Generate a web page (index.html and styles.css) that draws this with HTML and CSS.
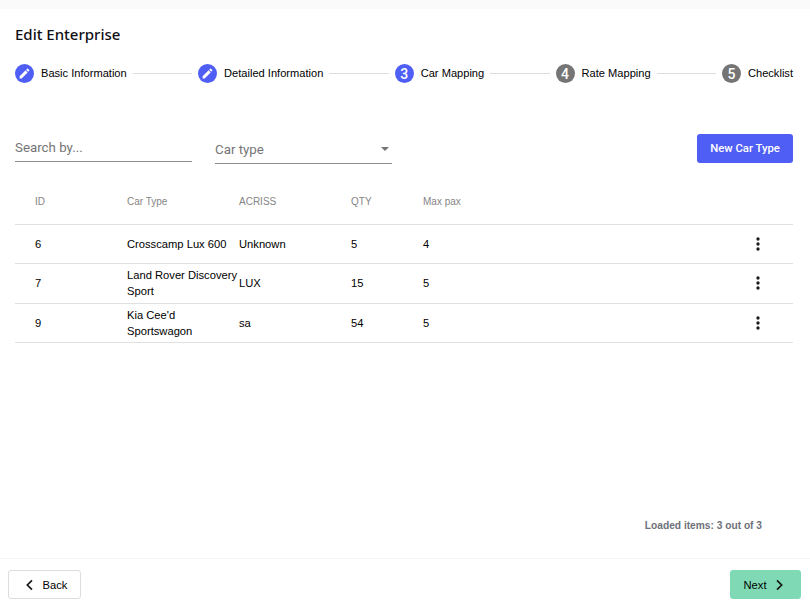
FILE: index.html
```html
<!DOCTYPE html>
<html lang="en">
<head>
<meta charset="utf-8">
<title>Edit Enterprise</title>
<link rel="stylesheet" href="styles.css">
</head>
<body>
<div class="page">
  <div class="topband"></div>
  <main class="main">
    <h1 class="title">Edit Enterprise</h1>
    <div class="stepper">
      <div class="step"><span class="circle active"><svg width="13" height="13" viewBox="0 0 24 24"><path fill="#fff" d="M3 17.25V21h3.75L17.81 9.94l-3.75-3.75L3 17.25zM20.71 7.04a1 1 0 0 0 0-1.41l-2.34-2.34a1 1 0 0 0-1.41 0l-1.83 1.83 3.75 3.75 1.83-1.83z"/></svg></span><span class="label">Basic Information</span></div>
      <div class="line"></div>
      <div class="step"><span class="circle active"><svg width="13" height="13" viewBox="0 0 24 24"><path fill="#fff" d="M3 17.25V21h3.75L17.81 9.94l-3.75-3.75L3 17.25zM20.71 7.04a1 1 0 0 0 0-1.41l-2.34-2.34a1 1 0 0 0-1.41 0l-1.83 1.83 3.75 3.75 1.83-1.83z"/></svg></span><span class="label">Detailed Information</span></div>
      <div class="line"></div>
      <div class="step"><span class="circle active">3</span><span class="label">Car Mapping</span></div>
      <div class="line"></div>
      <div class="step"><span class="circle">4</span><span class="label">Rate Mapping</span></div>
      <div class="line"></div>
      <div class="step"><span class="circle">5</span><span class="label">Checklist</span></div>
    </div>
    <div class="filters">
      <div class="field search"><span class="placeholder">Search by...</span></div>
      <div class="field select"><span class="placeholder">Car type</span><span class="caret"></span></div>
      <button class="primary" type="button">New Car Type</button>
    </div>
    <div class="table">
      <div class="row head"><span>ID</span><span>Car Type</span><span>ACRISS</span><span>QTY</span><span>Max pax</span><span></span></div>
      <div class="row"><span>6</span><span>Crosscamp Lux 600</span><span>Unknown</span><span>5</span><span>4</span><span class="menu"><svg width="20" height="20" viewBox="0 0 24 24"><path fill="#1a1a1a" d="M12 8a2 2 0 1 0 0-4 2 2 0 0 0 0 4zm0 2a2 2 0 1 0 0 4 2 2 0 0 0 0-4zm0 6a2 2 0 1 0 0 4 2 2 0 0 0 0-4z"/></svg></span></div>
      <div class="row"><span>7</span><span>Land Rover Discovery Sport</span><span>LUX</span><span>15</span><span>5</span><span class="menu"><svg width="20" height="20" viewBox="0 0 24 24"><path fill="#1a1a1a" d="M12 8a2 2 0 1 0 0-4 2 2 0 0 0 0 4zm0 2a2 2 0 1 0 0 4 2 2 0 0 0 0-4zm0 6a2 2 0 1 0 0 4 2 2 0 0 0 0-4z"/></svg></span></div>
      <div class="row"><span>9</span><span>Kia Cee'd Sportswagon</span><span>sa</span><span>54</span><span>5</span><span class="menu"><svg width="20" height="20" viewBox="0 0 24 24"><path fill="#1a1a1a" d="M12 8a2 2 0 1 0 0-4 2 2 0 0 0 0 4zm0 2a2 2 0 1 0 0 4 2 2 0 0 0 0-4zm0 6a2 2 0 1 0 0 4 2 2 0 0 0 0-4z"/></svg></span></div>
    </div>
    <div class="loaded">Loaded items: 3 out of 3</div>
  </main>
  <footer class="footer">
    <button class="nav back" type="button"><svg width="16" height="16" viewBox="0 0 24 24"><path fill="none" stroke="#1a1a1a" stroke-width="2.6" d="M15 5l-7 7 7 7"/></svg>Back</button>
    <button class="nav next" type="button">Next<svg width="16" height="16" viewBox="0 0 24 24"><path fill="none" stroke="#1a1a1a" stroke-width="2.6" d="M9 5l7 7-7 7"/></svg></button>
  </footer>
</div>
</body>
</html>
```
FILE: styles.css
```css
* { box-sizing: border-box; }
html, body { margin: 0; padding: 0; background: #fff; }
body { font-family: "Liberation Sans", Arial, sans-serif; color: #111; }
.page { width: 810px; height: 609px; display: flex; flex-direction: column; overflow: hidden; }
.topband { height: 9px; background: #fafafa; flex: none; }
.main { flex: 1; display: flex; flex-direction: column; padding: 0 17px 0 15px; min-height: 0; }
.title { margin: 15px 0 0; font: 500 15px/20px "Noto Sans", sans-serif; color: #111115; }
.stepper { display: flex; align-items: center; margin-top: 20px; height: 19px; }
.step { display: flex; align-items: center; gap: 7px; flex: none; }
.circle { width: 19px; height: 19px; border-radius: 50%; background: #757575; color: #fff; font: 500 14px Roboto, sans-serif; display: flex; align-items: center; justify-content: center; }
.circle.active { background: #4f5ef5; }
.label { font-size: 11.1px; line-height: 16px; padding-bottom: 1px; font-weight: 400; color: #000; }
.line { flex: 1; height: 1px; background: #ddd; margin: 0 6px; }
.filters { display: flex; align-items: flex-start; margin-top: 51px; height: 42px; }
.field { width: 177px; display: flex; align-items: center; border-bottom: 1px solid #8c8c8c; color: #757575; font: 400 13.3px Roboto, sans-serif; }
.search { height: 28px; padding-bottom: 1px; }
.select { height: 30px; margin-left: 23px; padding-top: 1px; justify-content: space-between; padding-right: 3px; }
.caret { width: 0; height: 0; border-left: 4px solid transparent; border-right: 4px solid transparent; border-top: 4px solid #757575; }
.primary { margin-left: auto; width: 96px; height: 29px; border: 0; border-radius: 3px; background: #4f5ef5; color: #fff; font: 500 11.3px Roboto, sans-serif; }
.row { display: grid; grid-template-columns: 112px 112px 112px 72px 1fr 70px; align-items: center; height: 39.33px; border-bottom: 1px solid #e0e0e0; font-size: 11.2px; line-height: 16px; font-weight: 400; color: #000; }
.row > span:first-child { padding-left: 20px; }
.row.head { height: 49px; padding-top: 3px; font-size: 10px; font-weight: 400; color: #858585; }
.menu { display: flex; justify-content: center; }
.loaded { margin-top: auto; margin-bottom: 27px; padding-right: 31px; text-align: right; font-size: 10.2px; font-weight: 700; color: #6e7179; }
.footer { flex: none; height: 51px; border-top: 1px solid #f4f4f4; display: flex; justify-content: space-between; align-items: flex-start; padding: 11px 9px 0 8px; }
.nav { height: 29px; border-radius: 3px; display: flex; align-items: center; justify-content: center; font: 400 11.2px "Liberation Sans", Arial, sans-serif; color: #000; padding: 0; }
.back { width: 73px; gap: 5px; background: #fff; border: 1px solid #ddd; }
.next { width: 71px; gap: 4px; padding-right: 1px; background: #7fd9b4; border: 0; }
```
